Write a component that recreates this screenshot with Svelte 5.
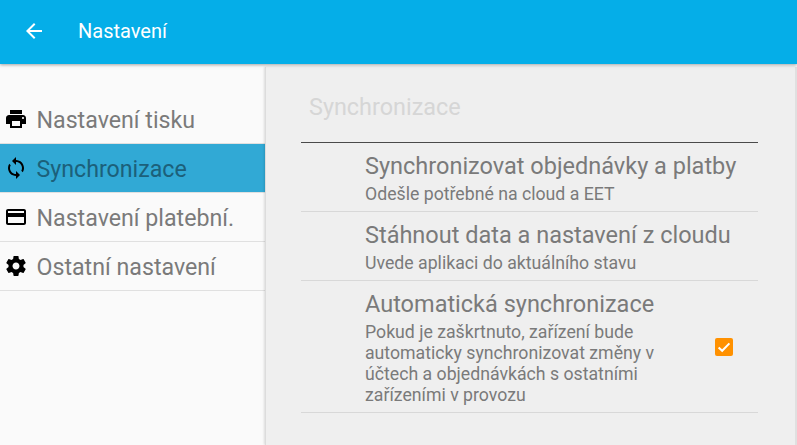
<script>
  const menu = [
    { label: 'Nastavení tisku', icon: 'M19 8H5c-1.66 0-3 1.34-3 3v6h4v4h12v-4h4v-6c0-1.66-1.34-3-3-3zm-3 11H8v-5h8v5zm3-7c-.55 0-1-.45-1-1s.45-1 1-1 1 .45 1 1-.45 1-1 1zm-1-9H6v4h12V3z' },
    { label: 'Synchronizace', active: true, icon: 'M12 4V1L8 5l4 4V6c3.31 0 6 2.69 6 6 0 1.01-.25 1.97-.7 2.8l1.46 1.46C19.54 15.03 20 13.57 20 12c0-4.42-3.58-8-8-8zm0 14c-3.31 0-6-2.69-6-6 0-1.01.25-1.97.7-2.8L5.24 7.74C4.46 8.97 4 10.43 4 12c0 4.42 3.58 8 8 8v3l4-4-4-4v3z' },
    { label: 'Nastavení platební.', icon: 'M20 4H4c-1.11 0-1.99.89-1.99 2L2 18c0 1.11.89 2 2 2h16c1.11 0 2-.89 2-2V6c0-1.11-.89-2-2-2zm0 14H4v-6h16v6zm0-10H4V6h16v2z' },
    { label: 'Ostatní nastavení', icon: 'M19.43 12.98c.04-.32.07-.64.07-.98s-.03-.66-.07-.98l2.11-1.65c.19-.15.24-.42.12-.64l-2-3.46c-.12-.22-.39-.3-.61-.22l-2.49 1c-.52-.4-1.08-.73-1.69-.98l-.38-2.65C14.46 2.18 14.25 2 14 2h-4c-.25 0-.46.18-.49.42l-.38 2.65c-.61.25-1.17.59-1.69.98l-2.49-1c-.23-.09-.49 0-.61.22l-2 3.46c-.13.22-.07.49.12.64l2.11 1.65c-.04.32-.07.65-.07.98s.03.66.07.98l-2.11 1.65c-.19.15-.24.42-.12.64l2 3.46c.12.22.39.3.61.22l2.49-1c.52.4 1.08.73 1.69.98l.38 2.65c.03.24.24.42.49.42h4c.25 0 .46-.18.49-.42l.38-2.65c.61-.25 1.17-.59 1.69-.98l2.49 1c.23.09.49 0 .61-.22l2-3.46c.12-.22.07-.49-.12-.64l-2.11-1.65zM12 15.5c-1.93 0-3.5-1.57-3.5-3.5s1.57-3.5 3.5-3.5 3.5 1.57 3.5 3.5-1.57 3.5-3.5 3.5z' }
  ];

  const settings = [
    { title: 'Synchronizovat objednávky a platby', text: ['Odešle potřebné na cloud a EET'] },
    { title: 'Stáhnout data a nastavení z cloudu', text: ['Uvede aplikaci do aktuálního stavu'] },
    {
      title: 'Automatická synchronizace',
      text: ['Pokud je zaškrtnuto, zařízení bude', 'automaticky synchronizovat změny v', 'účtech a objednávkách s ostatními', 'zařízeními v provozu'],
      checked: true
    }
  ];
</script>

<div class="screen">
  <header>
    <svg class="back" viewBox="0 0 24 24"><path d="M20 11H7.83l5.59-5.59L12 4l-8 8 8 8 1.41-1.41L7.83 13H20v-2z" /></svg>
    <span class="title">Nastavení</span>
  </header>

  <div class="body">
    <nav>
      {#each menu as item}
        <div class="item" class:active={item.active}>
          <svg viewBox="0 0 24 24"><path d={item.icon} /></svg>
          <span>{item.label}</span>
        </div>
      {/each}
    </nav>

    <main>
      <h2>Synchronizace</h2>
      <div class="list">
        {#each settings as row}
          <div class="row">
            <div class="texts">
              <div class="row-title">{row.title}</div>
              {#each row.text as line}
                <div class="row-text">{line}</div>
              {/each}
            </div>
            {#if row.checked}
              <div class="check">
                <svg viewBox="0 0 18 18"><path d="M3.6 9.4l3.6 3.4 7.2-7.4" /></svg>
              </div>
            {/if}
          </div>
        {/each}
      </div>
    </main>
  </div>
</div>

<style>
  :global(body) {
    margin: 0;
    font-family: Roboto, "Liberation Sans", sans-serif;
  }
  .screen {
    width: 797px;
    height: 445px;
    overflow: hidden;
    display: flex;
    flex-direction: column;
    background: #fafafa;
  }
  header {
    height: 64px;
    flex: none;
    display: flex;
    align-items: center;
    padding-bottom: 2px;
    box-sizing: border-box;
    background: #05aee8;
    box-shadow: 0 1px 3px rgba(0, 0, 0, 0.35);
    position: relative;
    z-index: 1;
  }
  .back {
    width: 24px;
    height: 24px;
    margin-left: 22px;
    fill: #fff;
  }
  .title {
    margin-left: 32px;
    font-size: 20px;
    color: #fff;
  }
  .body {
    flex: 1;
    display: flex;
    min-height: 0;
  }
  nav {
    width: 265px;
    flex: none;
    padding-top: 31px;
    box-sizing: border-box;
  }
  .item {
    height: 49px;
    box-sizing: border-box;
    display: flex;
    align-items: center;
    border-bottom: 1px solid #e0e0e0;
    color: #7a7a7a;
    font-size: 23.2px;
  }
  .item.active {
    background: #31a9d5;
    color: #1c607a;
  }
  .item span {
    padding-top: 2px;
  }
  .item svg {
    width: 24px;
    height: 24px;
    margin: 0 8.5px 0 4px;
    fill: #000;
    flex: none;
  }
  main {
    flex: 1;
    margin-top: 3px;
    padding: 0 37px 0 35px;
    background: #efefef;
    border-left: 1px solid #dcdcdc;
    border-right: 2px solid #e0e0e0;
    box-shadow: -1px 0 2px rgba(0, 0, 0, 0.12);
    min-width: 0;
  }
  h2 {
    margin: 0;
    height: 76px;
    box-sizing: border-box;
    padding: 26px 0 0 8px;
    font-size: 23.4px;
    line-height: 28px;
    font-weight: 400;
    color: #d6d6d6;
    border-bottom: 1px solid #4a4a4a;
  }
  .row {
    display: flex;
    align-items: center;
    padding: 9px 25px 6px 64px;
    border-bottom: 1px solid #d8d8d8;
  }
  .texts {
    flex: 1;
    min-width: 0;
    white-space: nowrap;
  }
  .row-title {
    font-size: 23.5px;
    line-height: 28px;
    margin-bottom: 4px;
    color: #7a7a7a;
  }
  .row-text {
    font-size: 17.7px;
    line-height: 21px;
    color: #7a7a7a;
  }
  .check {
    width: 18px;
    height: 18px;
    margin-top: -3px;
    border-radius: 2px;
    background: #ff9100;
    flex: none;
  }
  .check svg {
    display: block;
    width: 18px;
    height: 18px;
    fill: none;
    stroke: #fff;
    stroke-width: 2;
  }
</style>
